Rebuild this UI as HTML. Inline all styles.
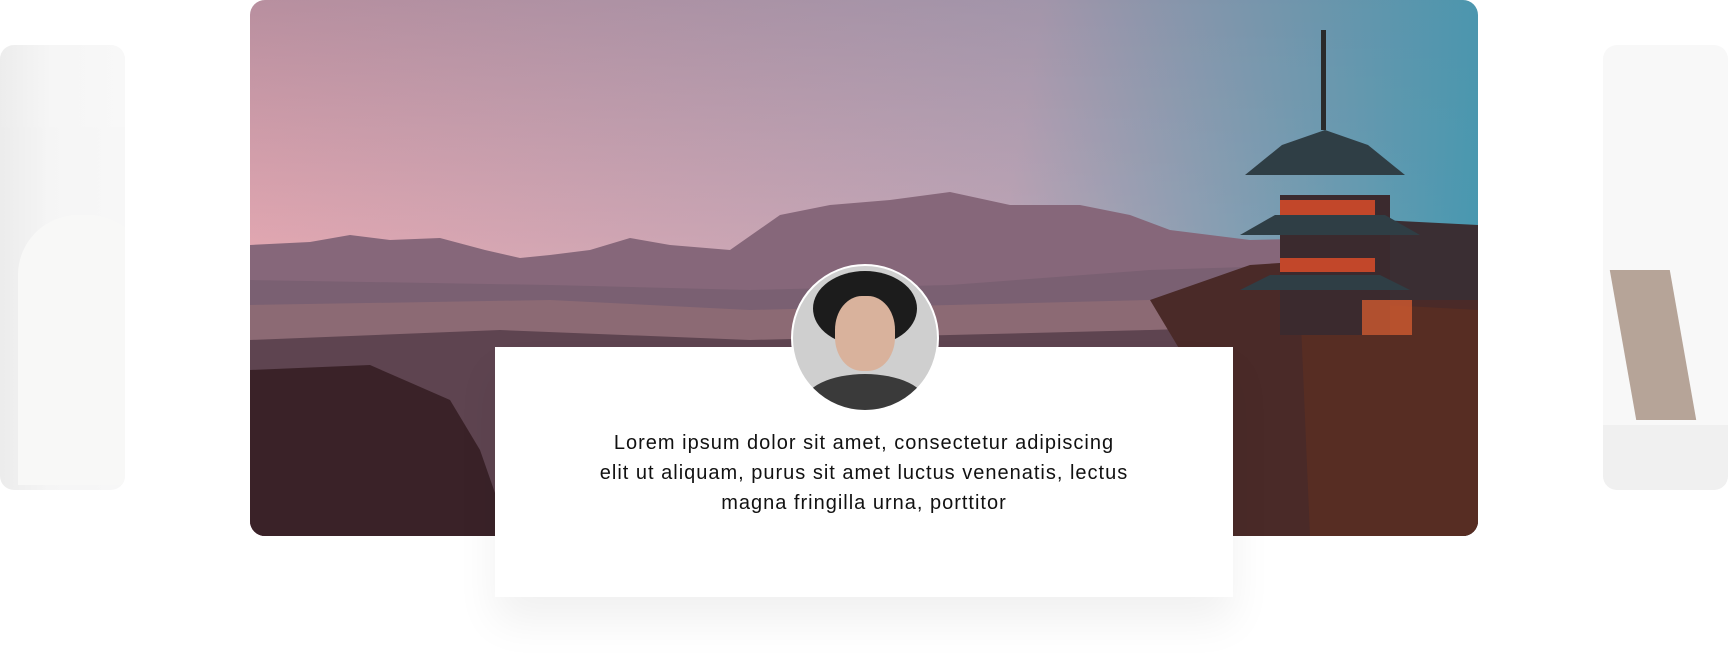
<!DOCTYPE html>
<html><head><style>
body{margin:0;width:1728px;height:669px;background:#fff;position:relative;overflow:hidden;font-family:"Liberation Sans",sans-serif}
.side{position:absolute;top:45px;height:445px;border-radius:14px;overflow:hidden;opacity:.55}
.main{position:absolute;left:250px;top:0;width:1228px;height:536px;border-radius:15px;overflow:hidden;
background:linear-gradient(100deg,rgba(240,170,180,0) 0%,rgba(120,160,190,.35) 60%,rgba(50,150,175,.95) 100%),linear-gradient(180deg,#b88f9f 0%,#e2a6b0 45%,#f2b6ba 65%,#e0a6ad 100%)}
.box{position:absolute;left:495px;top:347px;width:738px;height:250px;background:#fff;box-shadow:0 25px 40px rgba(0,0,0,.06)}
.txt{position:absolute;left:495px;width:738px;top:428px;text-align:center;font-size:20px;letter-spacing:1px;line-height:30px;color:#111}
.av{position:absolute;left:791px;top:264px;width:144px;height:144px;border-radius:50%;border:2px solid #fff;overflow:hidden;background:#cfcfcf}
</style></head><body>
<div class="side" style="left:0;width:125px;background:linear-gradient(90deg,#ddd 0%,#eee 40%,#f2f2f2 100%)">
 <div style="position:absolute;left:18px;top:170px;width:130px;height:270px;border-radius:60px 60px 0 0;background:#f4f4f2"></div>
</div>
<div class="side" style="left:1603px;width:125px;background:#f3f3f3">
 <div style="position:absolute;left:20px;top:225px;width:60px;height:150px;background:#7b5a45;transform:skewX(10deg)"></div>
 <div style="position:absolute;left:0;top:380px;width:125px;height:65px;background:#e4e4e4"></div>
</div>
<div class="main">
<svg width="1228" height="536" style="position:absolute;left:0;top:0">
 <path d="M0 245 L60 242 L100 235 L140 240 L190 238 L235 250 L270 258 L300 255 L340 250 L380 238 L420 245 L480 250 L530 215 L580 205 L640 200 L700 192 L760 205 L830 205 L880 215 L920 230 L1000 240 L1228 235 L1228 536 L0 536Z" fill="#86677a"/>
 <path d="M0 280 L300 285 L500 290 L700 285 L900 270 L1228 260 L1228 536 L0 536Z" fill="#7a6072"/>
 <path d="M0 305 L300 300 L500 310 L700 305 L900 300 L1228 295 L1228 536 L0 536Z" fill="#8c6a74"/>
 <path d="M0 340 L250 330 L500 340 L700 335 L900 330 L1228 320 L1228 536 L0 536Z" fill="#5e4450"/>
 <path d="M0 370 L120 365 L200 400 L230 450 L260 536 L0 536Z" fill="#3a2228"/>
 <path d="M900 300 L1000 265 L1228 250 L1228 536 L980 536 L960 400Z" fill="#4a2a28"/>
 <path d="M1050 300 L1228 310 L1228 536 L1060 536Z" fill="#5a2e22" opacity=".8"/>
 <path d="M1130 220 L1228 225 L1228 300 L1130 300Z" fill="#3a2e33"/>
 <rect x="1030" y="195" width="110" height="140" fill="#3b2a2e"/>
 <path d="M995 175 L1032 145 L1075 130 L1118 145 L1155 175Z" fill="#2f3e45"/>
 <rect x="1030" y="200" width="95" height="16" fill="#c2472a"/>
 <path d="M990 235 L1170 235 L1135 215 L1025 215Z" fill="#2f3e45"/>
 <rect x="1030" y="258" width="95" height="14" fill="#c2472a"/>
 <path d="M990 290 L1160 290 L1130 275 L1020 275Z" fill="#2f3e45"/>
 <rect x="1112" y="300" width="50" height="35" fill="#d05a30" opacity=".8"/>
 <rect x="1071" y="30" width="5" height="100" fill="#2a2a2a"/>
</svg>
</div>
<div class="box"></div>
<div class="av">
 <div style="position:absolute;left:20px;top:5px;width:104px;height:75px;border-radius:50%;background:#1c1c1c"></div>
 <div style="position:absolute;left:42px;top:30px;width:60px;height:75px;border-radius:45%;background:#d9b29c"></div>
 <div style="position:absolute;left:10px;top:108px;width:124px;height:60px;border-radius:50% 50% 0 0;background:#3a3a3a"></div>
</div>
<div class="txt">Lorem ipsum dolor sit amet, consectetur adipiscing<br>elit ut aliquam, purus sit amet luctus venenatis, lectus<br>magna fringilla urna, porttitor</div>
</body></html>
